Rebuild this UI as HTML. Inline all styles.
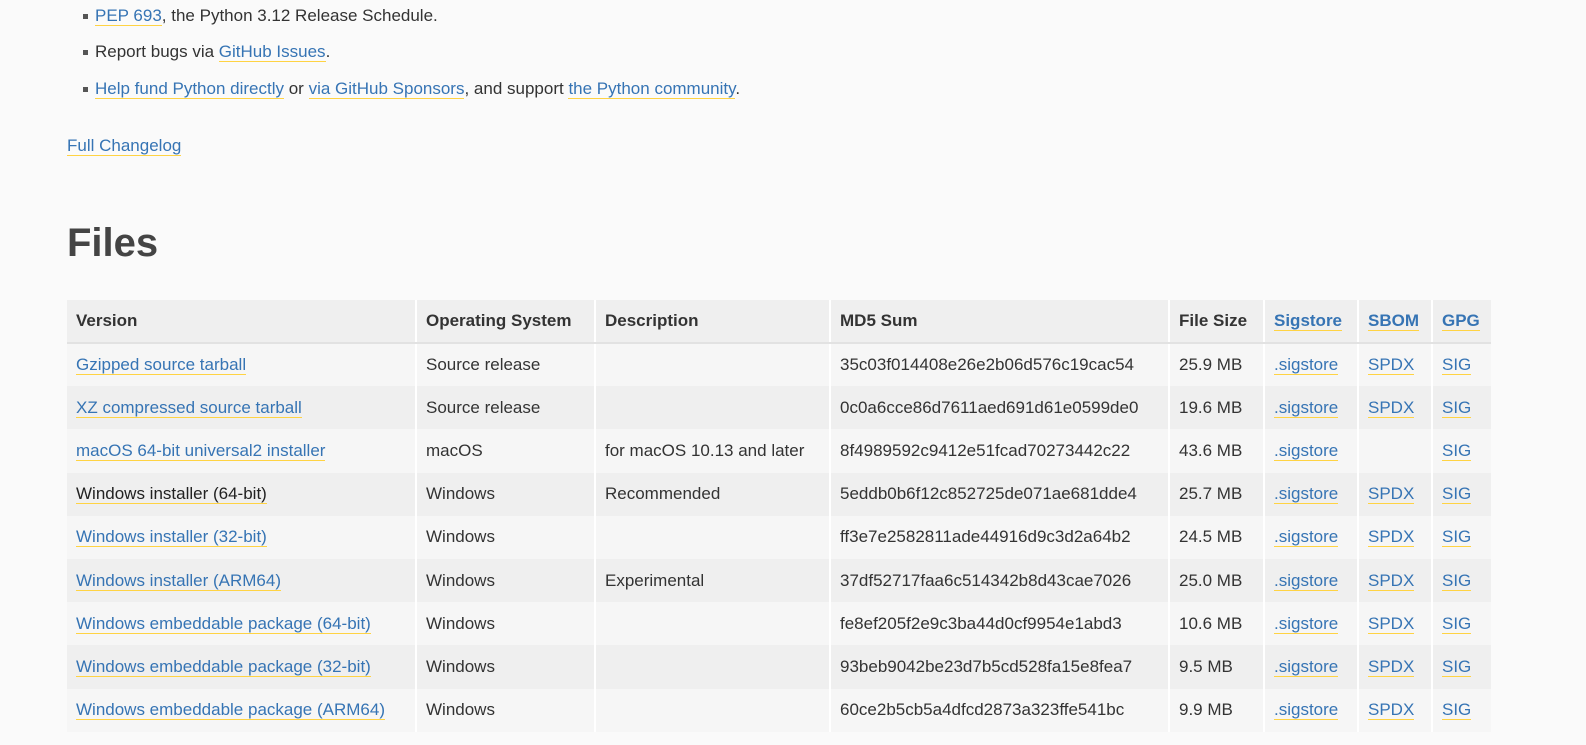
<!DOCTYPE html>
<html><head><meta charset="utf-8"><style>
html,body{margin:0;padding:0;background:#fafafa;width:1586px;height:745px;overflow:hidden;font-family:"Liberation Sans",sans-serif;color:#333;}
a{color:#3674b4;text-decoration:none;border-bottom:1px solid #ffd343;}
.li{position:absolute;left:95px;font-size:17px;line-height:20px;}
.li:before{content:"";position:absolute;left:-12px;top:8px;width:5px;height:5px;background:#555;}
.nb:before{display:none}
h1{position:absolute;left:67px;top:219px;margin:0;font-size:40px;font-weight:bold;color:#444;line-height:48px;}
table{position:absolute;left:67px;top:300px;width:1424px;border-collapse:collapse;font-size:17px;table-layout:fixed;}
td,th{height:43.2px;padding:0 0 0 9px;text-align:left;border-left:2px solid #fff;white-space:nowrap;box-sizing:border-box;}
td:first-child,th:first-child{border-left:none;}
th{background:#efefef;font-weight:bold;color:#333;border-bottom:2px solid #e2e2e2;height:43px;}
tr:nth-child(even) td{background:#f6f6f6;}
tr:nth-child(odd) td{background:#efefef;}
td a{line-height:18px;}
.d{color:#222;}
</style></head><body>
<div class="li" style="top:6px"><a href="#">PEP 693</a>, the Python 3.12 Release Schedule.</div>
<div class="li" style="top:42px">Report bugs via <a href="#">GitHub Issues</a>.</div>
<div class="li" style="top:79px"><a href="#">Help fund Python directly</a> or <a href="#">via GitHub Sponsors</a>, and support <a href="#">the Python community</a>.</div>
<div class="li nb" style="top:136px;left:67px"><a href="#">Full Changelog</a></div>
<h1>Files</h1>
<table>
<colgroup><col style="width:349px"><col style="width:179px"><col style="width:235px"><col style="width:339px"><col style="width:95px"><col style="width:94px"><col style="width:74px"><col style="width:59px"></colgroup>
<tr><th>Version</th><th>Operating System</th><th>Description</th><th>MD5 Sum</th><th>File Size</th><th><a href="#">Sigstore</a></th><th><a href="#">SBOM</a></th><th><a href="#">GPG</a></th></tr>
<tr><td><a href="#">Gzipped source tarball</a></td><td>Source release</td><td></td><td>35c03f014408e26e2b06d576c19cac54</td><td>25.9 MB</td><td><a href="#">.sigstore</a></td><td><a href="#">SPDX</a></td><td><a href="#">SIG</a></td></tr>
<tr><td><a href="#">XZ compressed source tarball</a></td><td>Source release</td><td></td><td>0c0a6cce86d7611aed691d61e0599de0</td><td>19.6 MB</td><td><a href="#">.sigstore</a></td><td><a href="#">SPDX</a></td><td><a href="#">SIG</a></td></tr>
<tr><td><a href="#">macOS 64-bit universal2 installer</a></td><td>macOS</td><td>for macOS 10.13 and later</td><td>8f4989592c9412e51fcad70273442c22</td><td>43.6 MB</td><td><a href="#">.sigstore</a></td><td></td><td><a href="#">SIG</a></td></tr>
<tr><td><a href="#" class="d">Windows installer (64-bit)</a></td><td>Windows</td><td>Recommended</td><td>5eddb0b6f12c852725de071ae681dde4</td><td>25.7 MB</td><td><a href="#">.sigstore</a></td><td><a href="#">SPDX</a></td><td><a href="#">SIG</a></td></tr>
<tr><td><a href="#">Windows installer (32-bit)</a></td><td>Windows</td><td></td><td>ff3e7e2582811ade44916d9c3d2a64b2</td><td>24.5 MB</td><td><a href="#">.sigstore</a></td><td><a href="#">SPDX</a></td><td><a href="#">SIG</a></td></tr>
<tr><td><a href="#">Windows installer (ARM64)</a></td><td>Windows</td><td>Experimental</td><td>37df52717faa6c514342b8d43cae7026</td><td>25.0 MB</td><td><a href="#">.sigstore</a></td><td><a href="#">SPDX</a></td><td><a href="#">SIG</a></td></tr>
<tr><td><a href="#">Windows embeddable package (64-bit)</a></td><td>Windows</td><td></td><td>fe8ef205f2e9c3ba44d0cf9954e1abd3</td><td>10.6 MB</td><td><a href="#">.sigstore</a></td><td><a href="#">SPDX</a></td><td><a href="#">SIG</a></td></tr>
<tr><td><a href="#">Windows embeddable package (32-bit)</a></td><td>Windows</td><td></td><td>93beb9042be23d7b5cd528fa15e8fea7</td><td>9.5 MB</td><td><a href="#">.sigstore</a></td><td><a href="#">SPDX</a></td><td><a href="#">SIG</a></td></tr>
<tr><td><a href="#">Windows embeddable package (ARM64)</a></td><td>Windows</td><td></td><td>60ce2b5cb5a4dfcd2873a323ffe541bc</td><td>9.9 MB</td><td><a href="#">.sigstore</a></td><td><a href="#">SPDX</a></td><td><a href="#">SIG</a></td></tr>
</table>
</body></html>
